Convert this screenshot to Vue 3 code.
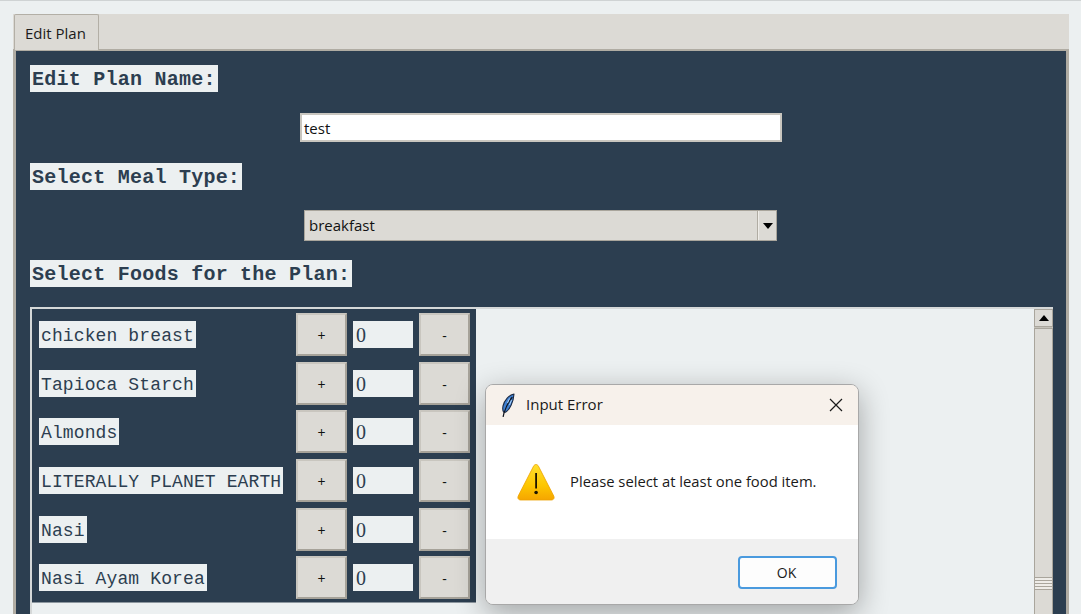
<template>
  <div class="screen">
    <div class="notebook">
      <div class="tabbar">
        <div class="tab">Edit Plan</div>
      </div>
      <div class="pane">
        <div class="heading">Edit Plan Name:</div>
        <div class="name-entry">test</div>
        <div class="heading">Select Meal Type:</div>
        <div class="combo">
          <div class="combo-value">breakfast</div>
          <div class="combo-arrow"><span class="tri-down"></span></div>
        </div>
        <div class="heading">Select Foods for the Plan:</div>
        <div class="canvas">
          <div class="food-frame">
            <div v-for="food in foods" :key="food" class="food-row">
              <div class="food-name">{{ food }}</div>
              <div class="step-btn">+</div>
              <div class="qty">0</div>
              <div class="step-btn">-</div>
            </div>
          </div>
          <div class="scrollbar">
            <div class="scroll-up"><span class="tri-up"></span></div>
            <div class="scroll-thumb">
              <div class="grip"></div>
            </div>
          </div>
        </div>
      </div>
    </div>

    <div class="dialog">
      <div class="dialog-title">
        <svg class="feather" viewBox="0 0 14 24" width="14" height="24">
          <path d="M13 1C8 2 3.500 7 2 13c-.5 2.500-.3 4.500 .5 6l2 .2C8.500 17 12.500 9 13 1z" fill="#3f80d2" stroke="#1b2a44" stroke-width="1.100" stroke-linejoin="round"/>
          <path d="M11 4.500C8 8 5.500 12.500 3 20l-.8 3.500" fill="none" stroke="#10151f" stroke-width="1.200" stroke-linecap="round"/>
          <path d="M8.500 5.500 6.500 10M10.500 7 8.500 12" stroke="#a9cff5" stroke-width="1" fill="none"/>
        </svg>
        <span class="dialog-caption">Input Error</span>
        <svg class="close-x" viewBox="0 0 14 14" width="14" height="14">
          <path d="M1 1l12 12M13 1L1 13" stroke="#1a1a1a" stroke-width="1.200" fill="none"/>
        </svg>
      </div>
      <div class="dialog-body">
        <svg class="warn" viewBox="0 0 38 38" width="38" height="38">
          <defs>
            <linearGradient id="warnFill" x1="0" y1="0" x2="0" y2="1">
              <stop offset="0" stop-color="#ffdf2e"/>
              <stop offset="0.6" stop-color="#fdc600"/>
              <stop offset="1" stop-color="#f6a500"/>
            </linearGradient>
          </defs>
          <path d="M19 1.500c1 0 1.800 .6 2.400 1.600l15.400 30c.9 1.900 -.1 3.900 -2.200 3.900H3.400c-2.100 0 -3.100 -2 -2.200 -3.900l15.400 -30C17.200 2.100 18 1.500 19 1.500z" fill="url(#warnFill)" stroke="#eea200" stroke-width="0.800"/>
          <rect x="18.200" y="10" width="1.800" height="15.500" fill="#1c1400"/>
          <circle cx="19.100" cy="29.500" r="1.800" fill="#1c1400"/>
        </svg>
        <div class="dialog-message">Please select at least one food item.</div>
      </div>
      <div class="dialog-footer">
        <div class="ok-btn">OK</div>
      </div>
    </div>
  </div>
</template>

<script setup>
const foods = [
  'chicken breast',
  'Tapioca Starch',
  'Almonds',
  'LITERALLY PLANET EARTH',
  'Nasi',
  'Nasi Ayam Korea',
]
</script>

<style>
html, body { margin: 0; overflow: hidden; }
</style>

<style scoped>
.screen {
  position: relative;
  width: 1081px;
  height: 614px;
  box-sizing: border-box;
  padding: 13px 12px 0 13px;
  overflow: hidden;
  background: #ecf0f1;
  border-top: 1px solid #cfd3d4;
  font-family: "Open Sans", "Noto Sans", sans-serif;
}
.notebook {
  display: flex;
  flex-direction: column;
  height: 640px;
}
.tabbar {
  display: flex;
  height: 35px;
  background: #dcdad5;
  border-bottom: 2px solid #b0aca3;
  box-sizing: content-box;
}
.tab {
  width: 85px;
  height: 36px;
  margin-left: 1px;
  box-sizing: border-box;
  border: 1px solid #b3afa6;
  border-bottom: none;
  border-radius: 2px 2px 0 0;
  background: #dcdad5;
  font-size: 15px;
  line-height: 37px;
  padding-left: 10px;
  color: #1b1b1b;
}
.pane {
  flex: 1;
  display: flex;
  flex-direction: column;
  min-height: 0;
  background: #2c3e50;
  border-left: 3px solid #b0aca3;
  border-right: 3px solid #b0aca3;
  padding: 14px 14px 0;
}
.heading {
  align-self: flex-start;
  height: 27px;
  line-height: 30px;
  padding: 0 2px;
  background: #ecf0f1;
  color: #2c3e50;
  font-family: "Liberation Mono", monospace;
  font-size: 20px;
  font-weight: 700;
  letter-spacing: 0.24px;
}
.name-entry {
  align-self: center;
  width: 482px;
  height: 29px;
  margin: 21px 0;
  box-sizing: border-box;
  border: 2px solid #c9c6bf;
  background: #fff;
  color: #111;
  font-size: 15px;
  line-height: 26px;
  padding-left: 2px;
}
.combo {
  align-self: center;
  display: flex;
  width: 473px;
  height: 31px;
  margin: 20px 1px 19px 0;
  box-sizing: border-box;
  border: 1px solid #a9a59c;
  background: #dcdad5;
}
.combo-value {
  flex: 1;
  padding-left: 4px;
  font-size: 15px;
  line-height: 28px;
  color: #111;
  border-right: 1px solid #b0aca3;
}
.combo-arrow {
  width: 17px;
  display: flex;
  align-items: center;
  justify-content: center;
  border-left: 1px solid #eeece8;
}
.tri-down {
  border-left: 5px solid transparent;
  border-right: 5px solid transparent;
  border-top: 6px solid #000;
}
.tri-up {
  border-left: 5px solid transparent;
  border-right: 5px solid transparent;
  border-bottom: 6px solid #000;
}
.canvas {
  display: flex;
  justify-content: space-between;
  align-items: flex-start;
  height: 320px;
  margin: 20px -1px 0 0;
  background: #ecf0f1;
  border-top: 2px solid #d5d8d8;
  border-left: 2px solid #d5d8d8;
}
.food-frame {
  display: flex;
  flex-direction: column;
  gap: 5.67px;
  padding: 4px 6px 3px 7px;
  background: #2c3e50;
  border-bottom: 1px solid #8d979f;
}
.food-row {
  display: grid;
  grid-template-columns: 251px 51px 60px 51px;
  column-gap: 6px;
  align-items: center;
  height: 43px;
}
.food-name {
  justify-self: start;
  height: 27px;
  line-height: 30px;
  padding: 0 2px;
  background: #ecf0f1;
  color: #2c3e50;
  font-family: "Liberation Mono", monospace;
  font-size: 18px;
  letter-spacing: 0.12px;
}
.step-btn {
  height: 43px;
  box-sizing: border-box;
  border: 2px solid;
  border-color: #c9c6bf #a6a299 #a6a299 #c9c6bf;
  background: #dcdad5;
  color: #111;
  font-size: 14px;
  line-height: 42px;
  text-align: center;
}
.qty {
  height: 27px;
  line-height: 29px;
  padding-left: 3px;
  background: #ecf0f1;
  color: #2c3e50;
  font-family: "Liberation Serif", serif;
  font-size: 20px;
}
.scrollbar {
  width: 19px;
  display: flex;
  flex-direction: column;
  height: 100%;
  background: #c4c1b9;
}
.scroll-up {
  height: 18px;
  box-sizing: border-box;
  border: 1px solid #a9a59c;
  background: #dcdad5;
  display: flex;
  align-items: center;
  justify-content: center;
}
.scroll-thumb {
  flex: 1;
  margin-top: 1px;
  box-sizing: border-box;
  border: 1px solid #a9a59c;
  background: #dcdad5;
  padding-top: 248px;
}
.grip {
  height: 13px;
  background: repeating-linear-gradient(to bottom, #a9a59c 0 1px, #eeece8 1px 3px);
}
.dialog {
  position: absolute;
  left: 485px;
  top: 383px;
  width: 374px;
  height: 221px;
  display: flex;
  flex-direction: column;
  box-sizing: border-box;
  border: 1px solid #a8a8a8;
  border-radius: 8px;
  overflow: hidden;
  background: #f0f0f0;
  box-shadow: 0 8px 30px rgba(0, 0, 0, 0.32);
}
.dialog-title {
  display: flex;
  align-items: center;
  height: 40px;
  padding: 0 15px 0 15px;
  background: #f7f1eb;
}
.feather { margin-right: 11px; }
.dialog-caption {
  flex: 1;
  padding-bottom: 2px;
  font-size: 15px;
  color: #1a1a1a;
}
.dialog-body {
  display: flex;
  align-items: center;
  height: 114px;
  padding-left: 31px;
  background: #fff;
}
.warn { margin-right: 15px; }
.dialog-message {
  font-size: 14.800px;
  color: #1a1a1a;
  padding-bottom: 2px;
}
.dialog-footer {
  flex: 1;
  display: flex;
  justify-content: flex-end;
  padding: 17px 21px 0 0;
  background: #f0f0f0;
}
.ok-btn {
  width: 99px;
  height: 33px;
  box-sizing: border-box;
  border: 2px solid #4a9ade;
  border-radius: 4px;
  background: #fdfdfd;
  color: #1a1a1a;
  font-size: 14px;
  line-height: 29px;
  padding-right: 2px;
  text-align: center;
}
</style>
